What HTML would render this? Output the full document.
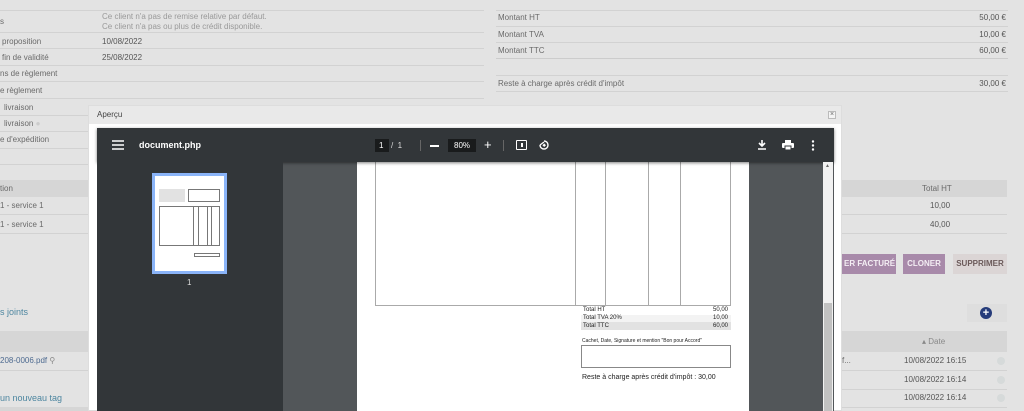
<!DOCTYPE html>
<html><head><meta charset="utf-8"><style>
*{margin:0;padding:0;box-sizing:border-box}
body{width:1024px;height:411px;overflow:hidden;background:#e3e3e3;font-family:"Liberation Sans",sans-serif;font-size:8px;color:#6a6a6a;position:relative}
.a{position:absolute}
.ln{position:absolute;height:1px;background:#d2d2d2}
.t{position:absolute;white-space:nowrap}
.w{color:#fff}
</style></head><body>
<div class="ln" style="left:0;top:10px;width:484px"></div>
<div class="t" style="left:102px;top:12px;color:#999">Ce client n'a pas de remise relative par défaut.</div>
<div class="t" style="left:102px;top:22px;color:#999">Ce client n'a pas ou plus de crédit disponible.</div>
<div class="t" style="left:0;top:17px">s</div>
<div class="ln" style="left:0;top:32px;width:484px"></div>
<div class="t" style="left:2px;top:37px">proposition</div><div class="t" style="left:102px;top:37px;color:#555">10/08/2022</div>
<div class="ln" style="left:0;top:48px;width:484px"></div>
<div class="t" style="left:2px;top:53px">fin de validité</div><div class="t" style="left:102px;top:53px;color:#555">25/08/2022</div>
<div class="ln" style="left:0;top:65px;width:484px"></div>
<div class="t" style="left:0;top:69px">ns de règlement</div>
<div class="ln" style="left:0;top:81px;width:484px"></div>
<div class="t" style="left:0;top:86px">e règlement</div>
<div class="ln" style="left:0;top:98px;width:484px"></div>
<div class="t" style="left:4px;top:103px">livraison</div>
<div class="ln" style="left:0;top:115px;width:90px"></div>
<div class="t" style="left:4px;top:119px">livraison <span style="color:#ccc">●</span></div>
<div class="ln" style="left:0;top:131px;width:90px"></div>
<div class="t" style="left:0;top:135px">e d'expédition</div>
<div class="ln" style="left:0;top:148px;width:90px"></div>
<div class="ln" style="left:0;top:164px;width:90px"></div>
<div class="a" style="left:0;top:180px;width:90px;height:17px;background:#d6d6d6"></div>
<div class="t" style="left:0;top:184px">tion</div>
<div class="t" style="left:0;top:201px">1 - service 1</div>
<div class="ln" style="left:0;top:214px;width:90px"></div>
<div class="t" style="left:0;top:220px">1 - service 1</div>
<div class="ln" style="left:0;top:233px;width:90px"></div>
<div class="t" style="left:0;top:307px;color:#4d86a0;font-size:9px">s joints</div>
<div class="a" style="left:0;top:331px;width:90px;height:21px;background:#d6d6d6"></div>
<div class="t" style="left:0;top:356px;color:#4d6a90">208-0006.pdf <span style="color:#888">&#9906;</span></div>
<div class="ln" style="left:0;top:370px;width:90px"></div>
<div class="t" style="left:0;top:393px;color:#4d86a0;font-size:9px">un nouveau tag</div>
<div class="a" style="left:0;top:407px;width:90px;height:4px;background:#d6d6d6"></div>
<div class="ln" style="left:496px;top:10px;width:512px"></div>
<div class="t" style="left:498px;top:13px">Montant HT</div><div class="t" style="right:18px;top:13px;color:#555">50,00 €</div>
<div class="ln" style="left:496px;top:26px;width:512px"></div>
<div class="t" style="left:498px;top:30px">Montant TVA</div><div class="t" style="right:18px;top:30px;color:#555">10,00 €</div>
<div class="ln" style="left:496px;top:42px;width:512px"></div>
<div class="t" style="left:498px;top:46px">Montant TTC</div><div class="t" style="right:18px;top:46px;color:#555">60,00 €</div>
<div class="ln" style="left:496px;top:58px;width:512px;background:#ccc"></div>
<div class="ln" style="left:496px;top:75px;width:512px"></div>
<div class="t" style="left:498px;top:79px">Reste à charge après crédit d'impôt</div><div class="t" style="right:18px;top:79px;color:#555">30,00 €</div>
<div class="ln" style="left:496px;top:91px;width:512px"></div>
<div class="a" style="left:842px;top:180px;width:165px;height:17px;background:#d6d6d6"></div>
<div class="t" style="left:922px;top:184px">Total HT</div>
<div class="t" style="left:930px;top:201px;color:#555">10,00</div>
<div class="ln" style="left:842px;top:214px;width:165px"></div>
<div class="t" style="left:930px;top:220px;color:#555">40,00</div>
<div class="ln" style="left:842px;top:233px;width:165px"></div>
<div class="a" style="left:842px;top:254px;width:54px;height:20px;background:#a88aaa;color:#f4eef4;font-weight:bold;font-size:8px;line-height:20px;padding-left:2px">ER FACTURÉ</div>
<div class="a" style="left:903px;top:254px;width:42px;height:20px;background:#a88aaa;color:#f4eef4;font-weight:bold;line-height:20px;text-align:center">CLONER</div>
<div class="a" style="left:953px;top:254px;width:54px;height:20px;background:#dbd5d5;color:#6b5a5a;font-weight:bold;line-height:20px;text-align:center">SUPPRIMER</div>
<div class="a" style="left:967px;top:304px;width:40px;height:18px;background:#dedede"></div>
<div class="a" style="left:980px;top:307px;width:12px;height:12px;border-radius:50%;background:#263c7a;color:#fff;font-weight:bold;font-size:11px;line-height:12px;text-align:center">+</div>
<div class="a" style="left:842px;top:331px;width:165px;height:21px;background:#d6d6d6"></div>
<div class="t" style="left:922px;top:337px;color:#888">▴ Date</div>
<div class="t" style="left:842px;top:356px">f...</div><div class="t" style="left:904px;top:356px;color:#555">10/08/2022 16:15</div>
<div class="a" style="left:997px;top:357px;width:8px;height:8px;border-radius:50%;background:#d6dada"></div>
<div class="ln" style="left:842px;top:370px;width:165px"></div>
<div class="t" style="left:904px;top:375px;color:#555">10/08/2022 16:14</div>
<div class="a" style="left:997px;top:376px;width:8px;height:8px;border-radius:50%;background:#d6dada"></div>
<div class="ln" style="left:842px;top:389px;width:165px"></div>
<div class="t" style="left:904px;top:393px;color:#555">10/08/2022 16:14</div>
<div class="a" style="left:997px;top:394px;width:8px;height:8px;border-radius:50%;background:#d6dada"></div>
<div class="ln" style="left:842px;top:407px;width:165px"></div>

<div class="a" style="left:88px;top:105px;width:754px;height:306px;background:#fff;border:1px solid #ddd"></div>
<div class="a" style="left:89px;top:106px;width:752px;height:18px;background:#e9e9e9"></div>
<div class="t" style="left:97px;top:110px;color:#444;font-size:8px">Aperçu</div>
<div class="a" style="left:828px;top:111px;width:8px;height:8px;border:1px solid #bbb;background:#f4f4f4;font-size:7px;line-height:6px;text-align:center;color:#666">×</div>
<div class="a" style="left:97px;top:128px;width:737px;height:283px;background:#525659"></div>
<div class="a" style="left:357px;top:162px;width:392px;height:249px;background:#fff"></div>
<div class="a" style="left:375px;top:158px;width:356px;height:148px;border:1px solid #aaa"></div>
<div class="a" style="left:575px;top:162px;width:1px;height:143px;background:#aaa"></div>
<div class="a" style="left:605px;top:162px;width:1px;height:143px;background:#aaa"></div>
<div class="a" style="left:648px;top:162px;width:1px;height:143px;background:#aaa"></div>
<div class="a" style="left:680px;top:162px;width:1px;height:143px;background:#aaa"></div>
<div class="a" style="left:97px;top:128px;width:737px;height:34px;background:#323639;box-shadow:0 1px 3px rgba(0,0,0,.5)"></div>
<div class="a" style="left:97px;top:162px;width:186px;height:249px;background:#323639"></div>
<svg class="a" style="left:112px;top:140px" width="12" height="10"><path d="M0 1h12M0 5h12M0 9h12" stroke="#fff" stroke-width="1.4"/></svg>
<div class="t w" style="left:139px;top:140px;font-size:9px;font-weight:bold">document.php</div>
<div class="a" style="left:375px;top:139px;width:14px;height:13px;background:#191b1c"></div>
<div class="t w" style="left:379px;top:141px;font-size:8px">1</div>
<div class="t" style="left:391px;top:141px;color:#ddd;font-size:8px">/ &nbsp;1</div>
<div class="a" style="left:420px;top:140px;width:1px;height:11px;background:#666"></div>
<div class="a" style="left:430px;top:145px;width:9px;height:1.5px;background:#fff"></div>
<div class="a" style="left:448px;top:139px;width:28px;height:13px;background:#191b1c"></div>
<div class="t w" style="left:454px;top:141px;font-size:8px">80%</div>
<div class="t w" style="left:484px;top:137px;font-size:13px">+</div>
<div class="a" style="left:503px;top:140px;width:1px;height:11px;background:#666"></div>
<div class="a" style="left:516px;top:140px;width:11px;height:10px;border:1.4px solid #fff;border-radius:1px"></div>
<div class="a" style="left:521px;top:143px;width:1.5px;height:4px;background:#fff"></div>
<svg class="a" style="left:538px;top:139px" width="12" height="12"><path d="M6 2a4 4 0 1 1-4 4" fill="none" stroke="#fff" stroke-width="1.4"/><path d="M2 6l4-3" fill="none" stroke="#fff" stroke-width="1.2"/><rect x="5" y="5" width="2.5" height="2.5" fill="#fff" transform="rotate(45 6.2 6.2)"/></svg>
<svg class="a" style="left:757px;top:139px" width="10" height="12"><path d="M5 1v6M2 4l3 3 3-3M1 10h8" fill="none" stroke="#fff" stroke-width="1.6"/></svg>
<svg class="a" style="left:782px;top:140px" width="12" height="10"><rect x="3" y="0" width="6" height="3" fill="#fff"/><rect x="0" y="3" width="12" height="5" rx="1" fill="#fff"/><rect x="3" y="6" width="6" height="4" fill="#fff" stroke="#323639" stroke-width="1"/></svg>
<svg class="a" style="left:811px;top:140px" width="4" height="11"><circle cx="2" cy="1.5" r="1.2" fill="#fff"/><circle cx="2" cy="5.5" r="1.2" fill="#fff"/><circle cx="2" cy="9.5" r="1.2" fill="#fff"/></svg>
<div class="a" style="left:152px;top:173px;width:75px;height:101px;background:#8ab4f8"></div>
<div class="a" style="left:155px;top:176px;width:69px;height:95px;background:#fff"></div>
<div class="a" style="left:159px;top:189px;width:26px;height:13px;background:#e2e2e2"></div>
<div class="a" style="left:188px;top:189px;width:32px;height:13px;border:1px solid #777"></div>
<div class="a" style="left:159px;top:206px;width:61px;height:40px;border:1px solid #777"></div>
<div class="a" style="left:193px;top:206px;width:1px;height:40px;background:#777"></div>
<div class="a" style="left:198px;top:206px;width:1px;height:40px;background:#777"></div>
<div class="a" style="left:207px;top:206px;width:1px;height:40px;background:#777"></div>
<div class="a" style="left:211px;top:206px;width:1px;height:40px;background:#777"></div>
<div class="a" style="left:194px;top:253px;width:26px;height:4px;border:1px solid #777"></div>
<div class="t" style="left:187px;top:278px;color:#ddd;font-size:8px">1</div>
<div class="a" style="left:581px;top:315px;width:150px;height:7px;background:#f3f3f3"></div>
<div class="a" style="left:581px;top:322px;width:150px;height:8px;background:#e2e2e2"></div>
<div class="t" style="left:583px;top:307px;color:#222;font-size:6px">Total HT</div><div class="t" style="left:713px;top:307px;color:#222;font-size:6px">50,00</div>
<div class="t" style="left:583px;top:315px;color:#222;font-size:6px">Total TVA 20%</div><div class="t" style="left:713px;top:315px;color:#222;font-size:6px">10,00</div>
<div class="t" style="left:583px;top:323px;color:#222;font-size:6px">Total TTC</div><div class="t" style="left:713px;top:323px;color:#222;font-size:6px">60,00</div>
<div class="t" style="left:582px;top:338px;color:#222;font-size:5px">Cachet, Date, Signature et mention "Bon pour Accord"</div>
<div class="a" style="left:581px;top:345px;width:150px;height:23px;border:1px solid #888"></div>
<div class="t" style="left:582px;top:374px;color:#222;font-size:7px">Reste à charge après crédit d'impôt : 30,00</div>
<div class="a" style="left:823px;top:162px;width:10px;height:249px;background:#f1f1f1"></div>
<div class="t" style="left:825px;top:163px;color:#666;font-size:5px">▲</div>
<div class="a" style="left:824px;top:303px;width:8px;height:108px;background:#c1c1c1"></div>
</body></html>
